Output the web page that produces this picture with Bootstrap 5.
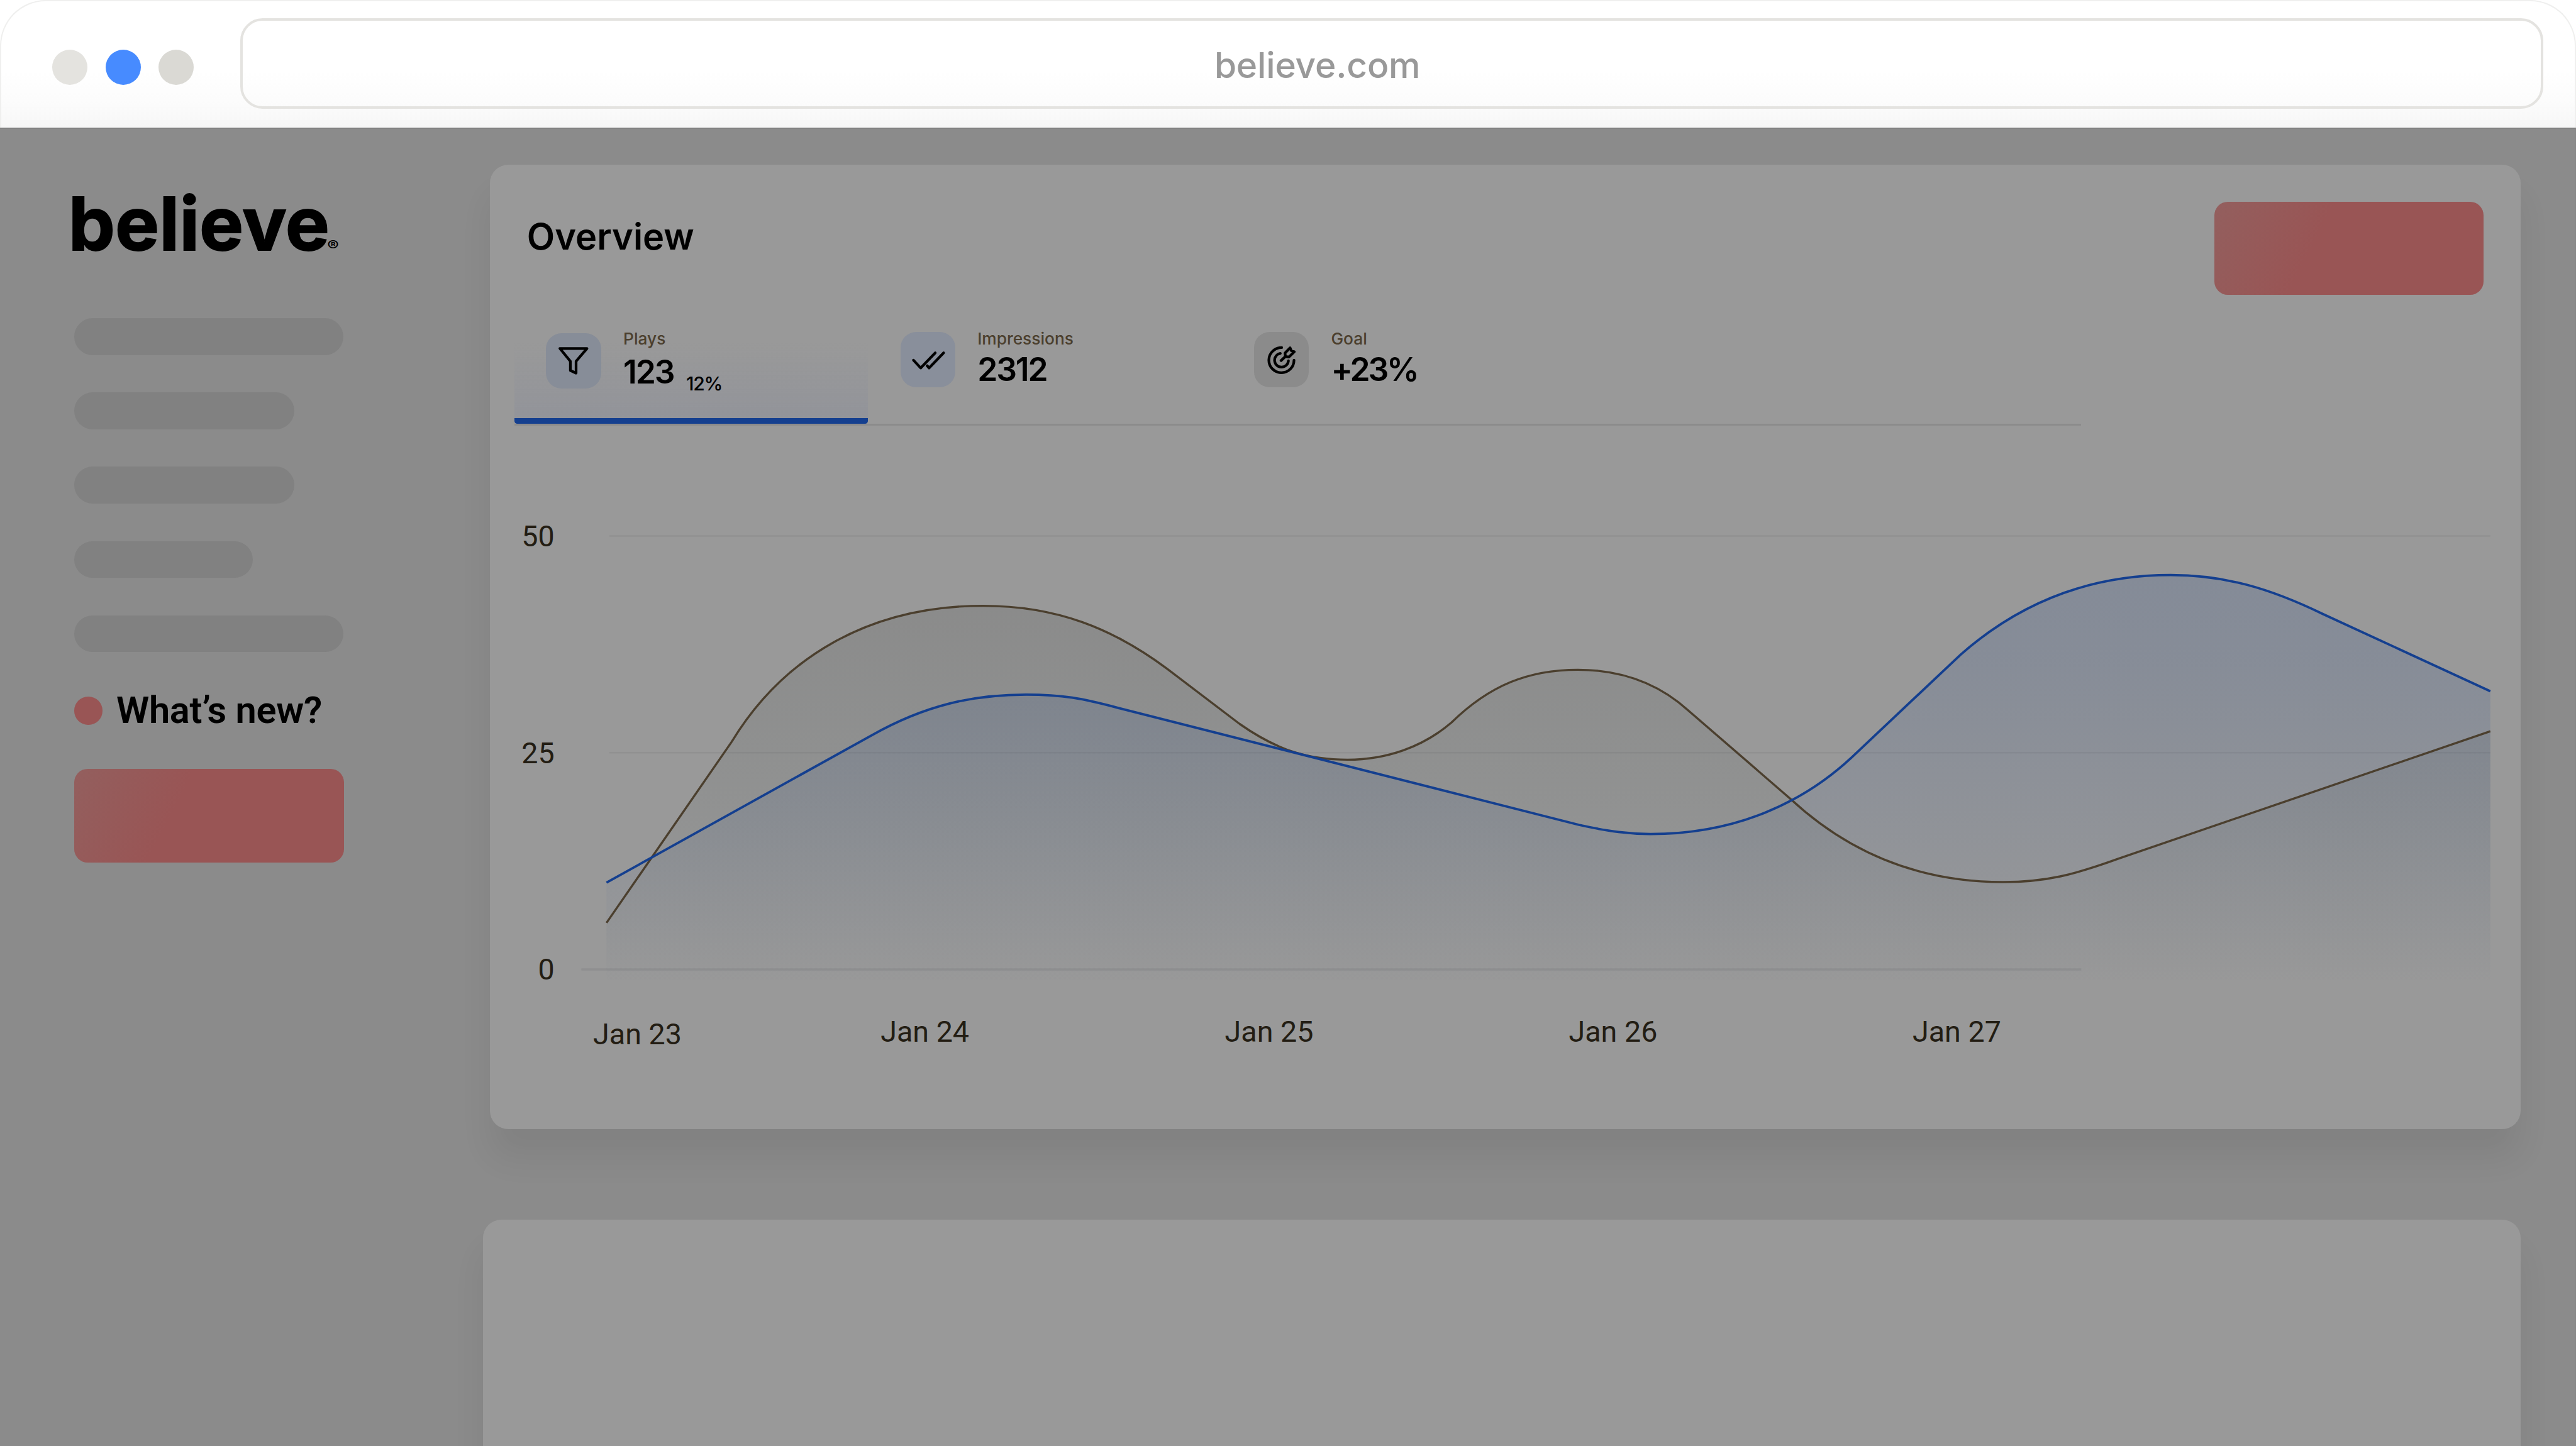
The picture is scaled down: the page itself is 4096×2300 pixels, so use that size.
<!DOCTYPE html>
<html lang="en">
<head>
<meta charset="utf-8">
<title>believe.com</title>
<link href="https://cdn.jsdelivr.net/npm/bootstrap@5.3.0/dist/css/bootstrap.min.css" rel="stylesheet">
<style>
:root{--u:.8888889px;--ink:#000;--brown:#4b3f2e;--blue:#143f8f;--rule:#8b8b8b;--surface:#999;--page:#8b8b8b}
body{font-family:Inter,"Liberation Sans",sans-serif;background:#fff;color:var(--ink);overflow:hidden}
.window{width:4096px;height:2300px}
/* browser chrome */
.topbar{height:calc(228*var(--u));padding:calc(30*var(--u)) calc(56*var(--u)) 0 calc(91.5*var(--u));border:calc(3*var(--u)) solid #efefee;border-bottom:0;border-radius:calc(82*var(--u)) calc(82*var(--u)) 0 0;background:linear-gradient(#fff 55%,#fcfcfc 78%,#f7f7f7)}
.lights{height:calc(162*var(--u));gap:calc(32*var(--u));margin-right:calc(82.5*var(--u));padding-top:calc(15*var(--u))}
.light{width:calc(63*var(--u));height:calc(63*var(--u));background:#e4e3df}
.light-on{background:#478bff}
.light-dim{background:#dad9d4}
.address{height:calc(162*var(--u));border:calc(5*var(--u)) solid #e4e3e0;border-radius:calc(40*var(--u));font-size:calc(64*var(--u));line-height:1;font-weight:500;color:#999;padding:calc(8*var(--u)) calc(266*var(--u)) 0 0}
.address span{letter-spacing:calc(-.2*var(--u))}
/* page */
.page{background:var(--page);border-top:calc(3*var(--u)) solid #818181;border-right:calc(3*var(--u)) solid #878787}
.side{width:calc(864*var(--u));padding-left:calc(133*var(--u))}
.logo{width:calc(500*var(--u));height:calc(140*var(--u));margin:calc(94*var(--u)) 0 0 calc(-4*var(--u));display:block;overflow:visible}
.pills{gap:calc(67*var(--u));margin-top:calc(105*var(--u))}
.pill{height:calc(66*var(--u));background:#818181}
.w-a{width:calc(481*var(--u))}.w-b{width:calc(394*var(--u))}.w-c{width:calc(319*var(--u))}
.news{margin-top:calc(71*var(--u));height:calc(67*var(--u));font:600 calc(67*var(--u))/1 Roboto,sans-serif;letter-spacing:calc(-.3*var(--u));gap:calc(25*var(--u))}
.news-dot{width:calc(50*var(--u));height:calc(50*var(--u));background:#995555}
.cta{width:calc(482*var(--u));height:calc(167*var(--u));border-radius:calc(24*var(--u));border:0;background:linear-gradient(117deg,#935f5e,#995555 38%)}
.side .cta{margin-top:calc(71*var(--u))}
.main{padding:calc(64.5*var(--u)) calc(97*var(--u)) 0 0}
.panel{background:var(--surface);border:0;border-radius:calc(33*var(--u));box-shadow:0 calc(52*var(--u)) calc(58*var(--u)) rgba(0,0,0,.065)}
.panel-main{height:calc(1726*var(--u));margin-left:calc(12*var(--u))}
.panel-next{height:calc(600*var(--u));margin-top:calc(162*var(--u))}
.panel-head{padding:calc(66*var(--u)) calc(66*var(--u)) 0 calc(66.5*var(--u));height:calc(232*var(--u))}
.title{font-size:calc(65*var(--u));line-height:1;font-weight:600;margin:calc(31*var(--u)) 0 0}
.tabs{margin:calc(43*var(--u)) 0 0 calc(44*var(--u));width:calc(2803*var(--u));height:calc(192.5*var(--u));border-bottom:calc(3.5*var(--u)) solid var(--rule)}
.tab{width:calc(632.5*var(--u));padding:calc(21.5*var(--u)) 0 0 calc(58*var(--u));gap:calc(40*var(--u));height:calc(189*var(--u))}
.tab-on{background:linear-gradient(rgba(125,137,168,0) 25%,rgba(132,137,155,.32));border-bottom:calc(10.5*var(--u)) solid var(--blue);border-radius:0 0 calc(5*var(--u)) calc(5*var(--u));padding-left:calc(57*var(--u))}
.tile{width:calc(98*var(--u));height:calc(99*var(--u));border-radius:calc(28*var(--u));background:#898f9b;margin-top:calc(2.5*var(--u));flex:none}
.tab-on .tile{margin-top:calc(5*var(--u));background:#878d98}
.tile-grey{background:#8b8b8b}
.tile svg{width:100%;height:100%;display:block;fill:none;stroke:#000;stroke-width:4.8;stroke-linecap:round;stroke-linejoin:round}
.cap{font-size:calc(29.6*var(--u));line-height:calc(30*var(--u));font-weight:550;color:var(--brown);padding-top:calc(1*var(--u))}
.num{font-size:calc(58*var(--u));line-height:1;font-weight:600;letter-spacing:calc(-2.4*var(--u));margin-top:calc(10*var(--u))}
.num-tight{letter-spacing:calc(-3.6*var(--u))}
.tab-on .num{margin-top:calc(15*var(--u))}
.delta{font-size:calc(34*var(--u));line-height:1;font-weight:500;letter-spacing:calc(-1.4*var(--u));margin:calc(78.5*var(--u)) 0 0 calc(-18*var(--u))}
.chart{width:calc(3632*var(--u));height:calc(1259*var(--u));display:block}
.chart text{font-family:Roboto,sans-serif;font-size:52.5px;fill:#231d13}
</style>
</head>
<body>
<div class="window d-flex flex-column">
  <header class="topbar d-flex flex-shrink-0">
    <div class="lights d-flex align-items-center">
      <i class="light rounded-circle"></i><i class="light light-on rounded-circle"></i><i class="light light-dim rounded-circle"></i>
    </div>
    <div class="address flex-grow-1 d-flex align-items-center justify-content-center"><span>believe.com</span></div>
  </header>
  <div class="page d-flex flex-grow-1 overflow-hidden">
    <aside class="side flex-shrink-0">
      <svg class="logo" viewBox="129 325 500 140" role="img" aria-label="believe">
        <text x="122" y="449" font-family="Inter" font-weight="700" font-size="132" textLength="467" lengthAdjust="spacingAndGlyphs" stroke="#000" stroke-width="2">believe</text>
        <text x="585" y="450" font-family="Inter" font-weight="600" font-size="25" textLength="21" lengthAdjust="spacingAndGlyphs">®</text>
      </svg>
      <div class="pills d-flex flex-column">
        <div class="pill rounded-pill w-a"></div><div class="pill rounded-pill w-b"></div><div class="pill rounded-pill w-b"></div><div class="pill rounded-pill w-c"></div><div class="pill rounded-pill w-a"></div>
      </div>
      <div class="news d-flex align-items-center"><i class="news-dot rounded-circle"></i><span>What’s new?</span></div>
      <button class="cta d-block" type="button" aria-label="Open"></button>
    </aside>
    <main class="main flex-grow-1">
      <section class="panel panel-main card">
        <div class="panel-head d-flex justify-content-between align-items-start">
          <h1 class="title">Overview</h1>
          <button class="cta" type="button" aria-label="Action"></button>
        </div>
        <nav class="tabs d-flex">
          <div class="tab tab-on d-flex">
            <div class="tile"><svg viewBox="0 0 98 99"><path d="M25 27.3H73.5L54 50.3V71.5L43.8 66.7V50.3Z"/></svg></div>
            <div><div class="cap">Plays</div><div class="num">123</div></div>
            <div class="delta">12%</div>
          </div>
          <div class="tab d-flex">
            <div class="tile"><svg viewBox="0 0 98 99"><path d="M23 50.5L36 64.5L62 37.5M47.5 60.5L51 64.5L77 37.5"/></svg></div>
            <div><div class="cap">Impressions</div><div class="num">2312</div></div>
          </div>
          <div class="tab d-flex">
            <div class="tile tile-grey"><svg viewBox="0 0 98 99"><path d="M49.5 28A22.5 22.5 0 1 0 71.5 50.5M47 38.3A12.4 12.4 0 1 0 61.5 51.5M48.3 51.3L56 44L55.5 37.8L64.5 28.5L66.8 33.5L72 35.5L62.5 44.8L56 44"/></svg></div>
            <div><div class="cap">Goal</div><div class="num num-tight">+23%</div></div>
          </div>
        </nav>
        <svg class="chart" viewBox="876 762 3632 1259">
          <defs>
            <linearGradient id="gb" gradientUnits="userSpaceOnUse" x1="0" y1="1030" x2="0" y2="1768"><stop offset="0" stop-color="#143f8f" stop-opacity=".155"/><stop offset=".2" stop-color="#143f8f" stop-opacity=".14"/><stop offset="1" stop-color="#143f8f" stop-opacity="0"/></linearGradient>
            <linearGradient id="gk" gradientUnits="userSpaceOnUse" x1="0" y1="1084" x2="0" y2="1768"><stop offset="0" stop-color="#2e302e" stop-opacity=".135"/><stop offset=".5" stop-color="#2e3a38" stop-opacity=".08"/><stop offset="1" stop-color="#2e3a38" stop-opacity="0"/></linearGradient>
          </defs>
          <path d="M1089 959.5H4455M1089 1347.5H4455" stroke="#919191" stroke-width="3"/>
          <path d="M1039 1735.5H3723" stroke="#8f8f90" stroke-width="4"/>
          <path fill="url(#gk)" d="M1084 1652L1308 1328C1398 1180 1550 1084 1758 1084C1890 1084 1990 1125 2087 1197L2217 1296C2290 1347 2345 1360 2410 1360C2480 1360 2545 1337 2596 1293.5C2665 1226 2735 1199 2822 1199C2900 1199 2965 1222 3020 1272L3203 1430.5C3305 1525 3430 1579 3583 1579C3660 1579 3710 1566 3790 1537L4455 1309V1768H1084Z"/>
          <path fill="url(#gb)" d="M1084 1580L1559 1316C1655 1262 1740 1243.5 1835 1243.5C1900 1243.5 1935 1250 2000 1267.4L2824 1476.6C2880 1489 2915 1493 2952 1493C3105 1493 3225 1437 3312 1356L3507 1172C3625 1068 3755 1029.5 3883 1029.5C3980 1029.5 4060 1053 4155 1099L4455 1237.5V1768H1084Z"/>
          <path fill="none" stroke="#4b3f2e" stroke-width="3.8" d="M1084 1652L1308 1328C1398 1180 1550 1084.5 1758 1084.5C1890 1084.5 1990 1125 2087 1197L2217 1296C2290 1347 2345 1360 2410 1360C2480 1360 2545 1337 2596 1293.5C2665 1226 2735 1199 2822 1199C2900 1199 2965 1222 3020 1272L3203 1430.5C3305 1525 3430 1579 3583 1579C3660 1579 3710 1566 3790 1537L4455 1309"/>
          <path fill="none" stroke="#143f8f" stroke-width="4.2" d="M1084 1580L1559 1316C1655 1262 1740 1243.5 1835 1243.5C1900 1243.5 1935 1250 2000 1267.4L2824 1476.6C2880 1489 2915 1493 2952 1493C3105 1493 3225 1437 3312 1356L3507 1172C3625 1068 3755 1029.5 3883 1029.5C3980 1029.5 4060 1053 4155 1099L4455 1237.5"/>
          <g text-anchor="end"><text x="991" y="978">50</text><text x="991" y="1366">25</text><text x="991" y="1753.5">0</text></g>
          <text x="1060" y="1869">Jan 23</text><text x="1574.5" y="1865">Jan 24</text><text x="2190.5" y="1865">Jan 25</text><text x="2806" y="1865">Jan 26</text><text x="3421" y="1865">Jan 27</text>
        </svg>
      </section>
      <section class="panel panel-next card"></section>
    </main>
  </div>
</div>
<script src="https://cdn.jsdelivr.net/npm/bootstrap@5.3.0/dist/js/bootstrap.bundle.min.js"></script>
</body>
</html>
